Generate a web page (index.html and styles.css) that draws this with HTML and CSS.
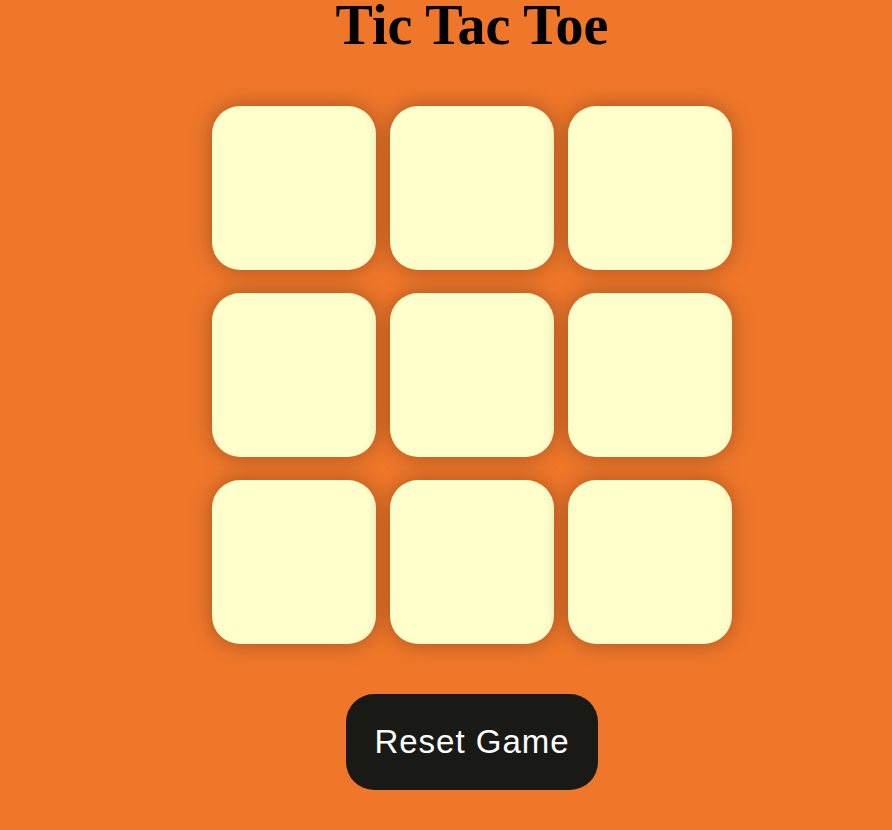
FILE: index.html
```html
<!DOCTYPE html>
<html lang="en">
<head>
<meta charset="utf-8">
<title>Tic Tac Toe</title>
<link rel="stylesheet" href="styles.css">
</head>
<body>
<main class="game">
  <h1 class="title">Tic Tac Toe</h1>
  <div class="board">
    <button class="cell"></button>
    <button class="cell"></button>
    <button class="cell"></button>
    <button class="cell"></button>
    <button class="cell"></button>
    <button class="cell"></button>
    <button class="cell"></button>
    <button class="cell"></button>
    <button class="cell"></button>
  </div>
  <button class="reset">Reset Game</button>
</main>
</body>
</html>
```

FILE: styles.css
```css
html, body {
  margin: 0;
  padding: 0;
  overflow: hidden;
}
body {
  background: #f0772a;
  min-height: 830px;
}
.game {
  display: flex;
  flex-direction: column;
  align-items: center;
  padding-left: 52px;
}
.title {
  font-family: "Liberation Serif", "Times New Roman", serif;
  font-weight: bold;
  font-size: 56px;
  line-height: 50px;
  margin: 0;
  color: #000;
}
.board {
  display: grid;
  grid-template-columns: repeat(3, 164px);
  grid-auto-rows: 164px;
  column-gap: 14px;
  row-gap: 23px;
  margin-top: 56px;
}
.cell {
  border: none;
  padding: 0;
  border-radius: 28px;
  background: #ffffcc;
  box-shadow: 0 0 22px rgba(0, 0, 0, 0.3), inset -6px 0 8px -6px rgba(0, 0, 0, 0.08);
}
.reset {
  margin-top: 50px;
  padding: 29px 28px;
  border: none;
  border-radius: 28px;
  background: #191a16;
  color: #fff;
  font-family: "Liberation Sans", Arial, sans-serif;
  font-size: 33px;
  letter-spacing: 1px;
}
```
